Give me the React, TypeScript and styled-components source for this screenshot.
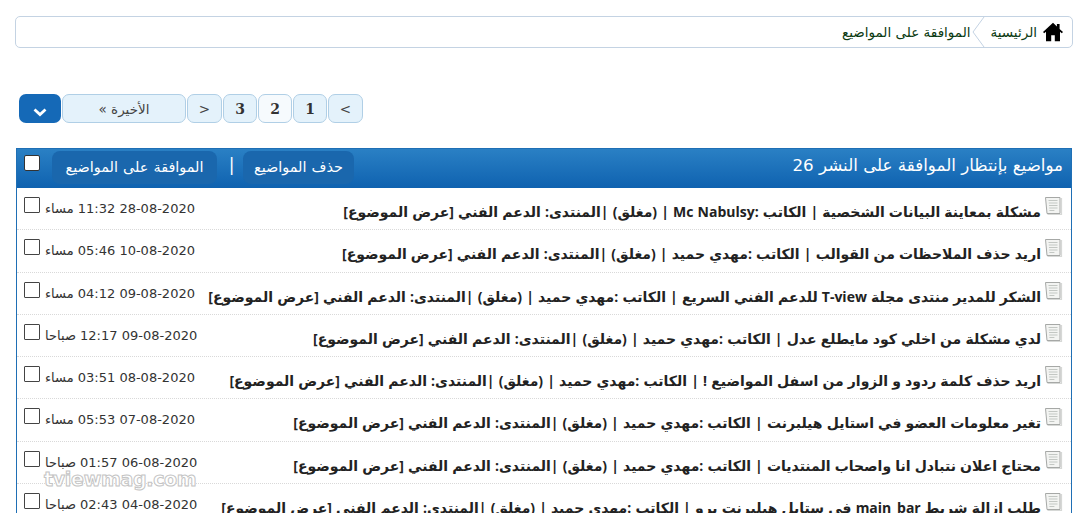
import { createGlobalStyle } from 'styled-components'
import styled from 'styled-components'

const GlobalStyle = createGlobalStyle`
  html, body {
    margin: 0;
    padding: 0;
    background: #fff;
    height: 513px;
    overflow: hidden;
  }
  body {
    font-family: 'DejaVu Sans', sans-serif;
  }
`

type Topic = {
  title: string
  author: string
  date: string
  period: string
}

const TOPICS: Topic[] = [
  { title: 'مشكلة بمعاينة البيانات الشخصية', author: 'Mc Nabulsy', date: '28-08-2020 11:32', period: 'مساء' },
  { title: 'اريد حذف الملاحظات من القوالب', author: 'مهدي حميد', date: '10-08-2020 05:46', period: 'مساء' },
  { title: 'الشكر للمدير منتدى مجلة T-view للدعم الفني السريع', author: 'مهدي حميد', date: '09-08-2020 04:12', period: 'مساء' },
  { title: 'لدي مشكلة من اخلي كود مايطلع عدل', author: 'مهدي حميد', date: '09-08-2020 12:17', period: 'صباحا' },
  { title: 'اريد حذف كلمة ردود و الزوار من اسفل المواضيع !', author: 'مهدي حميد', date: '08-08-2020 03:51', period: 'مساء' },
  { title: 'تغير معلومات العضو في استايل هيلبرنت', author: 'مهدي حميد', date: '07-08-2020 05:53', period: 'مساء' },
  { title: 'محتاج اعلان نتبادل انا واصحاب المنتديات', author: 'مهدي حميد', date: '06-08-2020 01:57', period: 'صباحا' },
  { title: 'طلب ازالة شريط main_bar في ستايل هيلبرنت برو', author: 'مهدي حميد', date: '04-08-2020 02:43', period: 'صباحا' },
]

function DocIcon() {
  return (
    <svg width="19" height="21" viewBox="0 0 19 21">
      <path d="M17.5 2v16.5H3.5" fill="none" stroke="#d6d8d6" strokeWidth="1.2" />
      <path d="M1.5 1.5h14.5v16H3z" fill="#f3f4f2" stroke="#a6a8a6" strokeWidth="1" />
      <path d="M4.5 4.5h9M4.8 7h8.7M5 9.5h8.5M5.2 12h8.3M5.4 14.5h5" stroke="#c3c7c3" strokeWidth="1.2" />
    </svg>
  )
}

function HomeIcon() {
  return (
    <svg width="20" height="20" viewBox="0 0 20 20">
      <path d="M10 .8 0 10l1.2 1.3L3 9.7V19.2h5.2v-6h3.6v6H17V9.7l1.8 1.6L20 10l-3.4-3.1V2h-2.7v2.4z" fill="#000" />
    </svg>
  )
}

export default function App() {
  return (
    <Page dir="rtl">
      <GlobalStyle />
      <Breadcrumb>
        <HomeIcon />
        <Crumb>الرئيسية</Crumb>
        <CrumbArrow width="13" height="30" viewBox="0 0 13 30">
          <path d="M12 0 1 15l11 15" fill="none" stroke="#c4d3e3" strokeWidth="1" />
        </CrumbArrow>
        <Crumb>الموافقة على المواضيع</Crumb>
      </Breadcrumb>

      <Pagination>
        <PageButton $width={35}>{'\u200E>'}</PageButton>
        <PageNumber>1</PageNumber>
        <PageNumber $active>2</PageNumber>
        <PageNumber>3</PageNumber>
        <PageButton $width={35}>{'\u200E<'}</PageButton>
        <PageButton $width={124}>الأخيرة »</PageButton>
        <JumpButton>
          <svg width="14" height="9" viewBox="0 0 14 9">
            <path d="M1.5 1.5 7 6.5l5.5-5" fill="none" stroke="#fff" strokeWidth="2.8" />
          </svg>
        </JumpButton>
      </Pagination>

      <Panel>
        <PanelHeader>
          <PanelTitle>مواضيع بإنتظار الموافقة على النشر 26</PanelTitle>
          <PanelActions>
            <ActionButton $width={111}>حذف المواضيع</ActionButton>
            <ActionDivider>|</ActionDivider>
            <ActionButton $width={165}>الموافقة على المواضيع</ActionButton>
            <HeaderCheck />
          </PanelActions>
        </PanelHeader>
        {TOPICS.map((t) => (
          <Row key={t.date}>
            <TopicCell>
              <DocIcon />
              <TopicText>
                {t.title} | الكاتب :{t.author} | (مغلق) |المنتدى: الدعم الفني [عرض الموضوع]
              </TopicText>
            </TopicCell>
            <MetaCell>
              <DateText>
                {t.date} {t.period}
              </DateText>
              <RowCheck />
            </MetaCell>
          </Row>
        ))}
      </Panel>

      <Watermark dir="ltr">tviewmag.com</Watermark>
    </Page>
  )
}

const Page = styled.div`
  position: relative;
  height: 513px;
  overflow: hidden;
  padding: 16px 18px 0 15px;
  box-sizing: border-box;
`

const Breadcrumb = styled.div`
  display: flex;
  align-items: center;
  height: 32px;
  box-sizing: border-box;
  border: 1px solid #c4d3e3;
  border-radius: 5px;
  padding: 0 9px 0 0;
  color: #0b3a12;
  font-size: 13.5px;
  gap: 6px;
`

const Crumb = styled.span`
  white-space: nowrap;
`

const CrumbArrow = styled.svg`
  flex: none;
  margin: 0 0 0 -5px;
`

const Pagination = styled.div`
  display: flex;
  justify-content: flex-start;
  gap: 1px;
  height: 29px;
  margin-top: 46px;
  margin-right: 710px;
`

const PageButton = styled.div<{ $width: number }>`
  width: ${(p) => p.$width}px;
  height: 29px;
  box-sizing: border-box;
  display: flex;
  align-items: center;
  justify-content: center;
  background: #e4f2fb;
  border: 1px solid #b0cfe6;
  border-radius: 7px;
  color: #444;
  font-size: 13.5px;
`

const PageNumber = styled.div<{ $active?: boolean }>`
  width: 34px;
  height: 29px;
  box-sizing: border-box;
  display: flex;
  align-items: center;
  justify-content: center;
  background: ${(p) => (p.$active ? '#f6fafd' : '#e4f2fb')};
  border: 1px solid #b0cfe6;
  border-radius: 7px;
  color: #333;
  font-family: 'DejaVu Serif', serif;
  font-weight: bold;
  font-size: 14px;
`

const JumpButton = styled.div`
  width: 42px;
  height: 29px;
  display: flex;
  align-items: flex-end;
  justify-content: center;
  padding-bottom: 6px;
  box-sizing: border-box;
  background: #1569b7;
  border-radius: 7px;
`

const Panel = styled.div`
  margin: 25px 1px 0 1px;
  border-left: 1px solid #1f6fb5;
  border-right: 1px solid #1f6fb5;
  border-top: 1px solid #1f6fb5;
`

const PanelHeader = styled.div`
  display: flex;
  align-items: flex-start;
  justify-content: space-between;
  height: 39px;
  padding: 0 8px 0 0;
  background: linear-gradient(#2a80c4, #0f62b0);
  color: #fff;
`

const PanelTitle = styled.div`
  font-size: 16.7px;
  line-height: 33px;
  white-space: nowrap;
`

const PanelActions = styled.div`
  display: flex;
  align-items: flex-start;
  padding-left: 7px;
  padding-top: 2px;
`

const ActionButton = styled.div<{ $width: number }>`
  width: ${(p) => p.$width}px;
  height: 33px;
  padding-bottom: 2px;
  box-sizing: border-box;
  display: flex;
  align-items: center;
  justify-content: center;
  background: #1a67ad;
  border-radius: 8px;
  color: #fff;
  font-size: 14.4px;
  word-spacing: 0.5px;
  white-space: nowrap;
`

const ActionDivider = styled.span`
  width: 26px;
  box-sizing: border-box;
  padding-left: 3px;
  line-height: 29px;
  text-align: center;
  font-size: 17px;
`

const HeaderCheck = styled.span`
  width: 16px;
  height: 16px;
  box-sizing: border-box;
  border: 1px solid #333;
  border-radius: 2px;
  background: #fff;
  margin: 4px 12px 0 0;
`

const Row = styled.div`
  display: flex;
  justify-content: space-between;
  height: 42.3px;
  box-sizing: border-box;
  border-bottom: 1px dotted #d9d9d9;
  padding: 8px 8px 0 7px;
`

const TopicCell = styled.div`
  display: flex;
  align-items: flex-start;
  gap: 3px;
`

const TopicText = styled.span`
  font-family: 'Open Sans', 'DejaVu Sans', sans-serif;
  font-size: 14px;
  font-weight: bold;
  word-spacing: 0.5px;
  color: #222;
  white-space: pre;
  line-height: 18px;
  margin-top: 7px;
`

const MetaCell = styled.div`
  display: flex;
  align-items: flex-start;
  gap: 5px;
`

const DateText = styled.span`
  font-size: 13px;
  color: #333;
  white-space: nowrap;
  line-height: 16px;
  margin-top: 5px;
`

const RowCheck = styled.span`
  width: 16px;
  height: 16px;
  box-sizing: border-box;
  border: 1px solid #444;
  border-radius: 1px;
  background: #fff;
  margin-top: 1px;
`

const Watermark = styled.div`
  position: absolute;
  left: 44px;
  top: 468px;
  font-family: 'DejaVu Sans', sans-serif;
  font-size: 19px;
  font-weight: bold;
  letter-spacing: -0.3px;
  color: #fff;
  -webkit-text-stroke: 1px #c4c4c4;
`
